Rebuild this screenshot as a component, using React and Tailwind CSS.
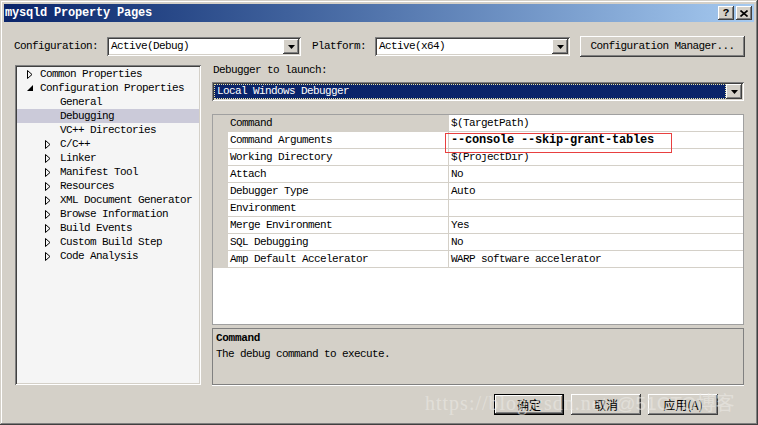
import React from "react";

const raised =
  "shadow-[inset_-1px_-1px_#404040,inset_1px_1px_#ffffff,inset_-2px_-2px_#808080,inset_2px_2px_#d4d0c8]";
const sunken =
  "shadow-[inset_1px_1px_#808080,inset_-1px_-1px_#ffffff,inset_2px_2px_#404040,inset_-2px_-2px_#d4d0c8]";
const txt = "text-[11px] tracking-[-0.6px] text-black whitespace-nowrap";

const DownArrow = () => (
  <svg width="7" height="4" viewBox="0 0 7 4">
    <polygon points="0,0 7,0 3.5,4" fill="#000" />
  </svg>
);

const ComboButton = () => (
  <div className={`w-[16px] h-[15px] bg-[#d4d0c8] flex items-center justify-center ${raised}`}>
    <DownArrow />
  </div>
);

const Combo = ({ value, width }) => (
  <div className={`${width} h-[19px] bg-white flex items-center pl-[4px] pr-[2px] ${sunken}`}>
    <span className={`${txt} flex-1`}>{value}</span>
    <ComboButton />
  </div>
);

const treeItems = [
  { label: "Common Properties", kind: "closed0" },
  { label: "Configuration Properties", kind: "open0" },
  { label: "General", kind: "leaf" },
  { label: "Debugging", kind: "leaf", selected: true },
  { label: "VC++ Directories", kind: "leaf" },
  { label: "C/C++", kind: "closed1" },
  { label: "Linker", kind: "closed1" },
  { label: "Manifest Tool", kind: "closed1" },
  { label: "Resources", kind: "closed1" },
  { label: "XML Document Generator", kind: "closed1" },
  { label: "Browse Information", kind: "closed1" },
  { label: "Build Events", kind: "closed1" },
  { label: "Custom Build Step", kind: "closed1" },
  { label: "Code Analysis", kind: "closed1" },
];

const ClosedArrow = () => (
  <svg width="6" height="9" viewBox="0 0 6 9">
    <polygon points="0.5,0.5 5,4.5 0.5,8.5" fill="none" stroke="#000" strokeWidth="1" />
  </svg>
);

const OpenArrow = () => (
  <svg width="6" height="6" viewBox="0 0 6 6">
    <polygon points="6,0 6,6 0,6" fill="#000" />
  </svg>
);

const TreeRow = ({ item }) => {
  let lead = null;
  if (item.kind === "closed0")
    lead = (
      <div className="pl-[10px] w-[23px] flex items-center">
        <ClosedArrow />
      </div>
    );
  else if (item.kind === "open0")
    lead = (
      <div className="pl-[10px] w-[23px] flex items-center">
        <OpenArrow />
      </div>
    );
  else if (item.kind === "closed1")
    lead = (
      <div className="pl-[28px] w-[43px] flex items-center">
        <ClosedArrow />
      </div>
    );
  else lead = <div className="w-[43px]" />;

  return (
    <div className={`h-[14px] flex items-center ${item.selected ? "bg-[#cbcad9]" : ""}`}>
      {lead}
      <span className={txt}>{item.label}</span>
    </div>
  );
};

const gridRows = [
  { name: "Command", value: "$(TargetPath)", selected: true },
  { name: "Command Arguments", value: "--console --skip-grant-tables", bold: true },
  { name: "Working Directory", value: "$(ProjectDir)" },
  { name: "Attach", value: "No" },
  { name: "Debugger Type", value: "Auto" },
  { name: "Environment", value: "" },
  { name: "Merge Environment", value: "Yes" },
  { name: "SQL Debugging", value: "No" },
  { name: "Amp Default Accelerator", value: "WARP software accelerator" },
];

const GridRow = ({ row }) => (
  <div className="flex h-[17px]">
    <div className="w-[15px] bg-[#d4d0c8]" />
    <div
      className={`w-[221px] border-b border-r border-[#d4d0c8] flex items-center pl-[2px] ${
        row.selected ? "bg-[#d4d0c8]" : ""
      }`}
    >
      <span className={txt}>{row.name}</span>
    </div>
    <div className="flex-1 border-b border-[#d4d0c8] flex items-center pl-[2px]">
      {row.bold ? (
        <span className="text-[12px] tracking-[-0.2px] font-bold text-black whitespace-nowrap">
          {row.value}
        </span>
      ) : (
        <span className={txt}>{row.value}</span>
      )}
    </div>
  </div>
);

const DlgButton = ({ children, isDefault }) => (
  <div
    className={`w-[70px] h-[21px] bg-[#d4d0c8] flex items-center justify-center ${
      isDefault ? "border border-black" : ""
    } ${raised}`}
  >
    <span className="font-['Noto_Sans_CJK_SC',sans-serif] text-[12px] leading-none text-black">
      {children}
    </span>
  </div>
);

export default function App() {
  return (
    <div
      className={`relative w-[758px] h-[425px] bg-[#d4d0c8] p-[4px] flex flex-col font-['Liberation_Mono',monospace] shadow-[inset_-1px_-1px_#404040,inset_1px_1px_#d4d0c8,inset_-2px_-2px_#808080,inset_2px_2px_#ffffff]`}
    >
      {/* title bar */}
      <div className="h-[18px] bg-gradient-to-r from-[#0a246a] to-[#a6caf0] flex items-center pl-[1px] pr-[2px]">
        <span className="text-[12px] tracking-[-0.2px] font-bold text-white flex-1 whitespace-nowrap">
          mysqld Property Pages
        </span>
        <div className={`w-[16px] h-[14px] bg-[#d4d0c8] flex items-center justify-center ${raised}`}>
          <span className="text-[11px] font-bold leading-none text-black">?</span>
        </div>
        <div className={`ml-[2px] w-[16px] h-[14px] bg-[#d4d0c8] flex items-center justify-center ${raised}`}>
          <svg width="8" height="7" viewBox="0 0 8 7">
            <path d="M0.5 0.5 L7.5 6.5 M7.5 0.5 L0.5 6.5" stroke="#000" strokeWidth="1.6" />
          </svg>
        </div>
      </div>

      {/* configuration row */}
      <div className="mt-[14px] h-[21px] flex items-center pl-[10px]">
        <span className={`${txt} w-[93px]`}>Configuration:</span>
        <Combo value="Active(Debug)" width="w-[194px]" />
        <span className={`${txt} ml-[11px] w-[63px]`}>Platform:</span>
        <Combo value="Active(x64)" width="w-[195px]" />
        <div className={`ml-[10px] w-[165px] h-[21px] flex items-center justify-center ${raised}`}>
          <span className={txt}>Configuration Manager...</span>
        </div>
      </div>

      {/* main area */}
      <div className="mt-[8px] h-[320px] flex">
        <div className={`ml-[11px] w-[186px] h-[320px] bg-[#f5f5f5] p-[2px] ${sunken}`}>
          {treeItems.map((item) => (
            <TreeRow key={item.label} item={item} />
          ))}
        </div>

        <div className="ml-[11px] w-[532px] flex flex-col">
          <div className="mt-[-2px] h-[14px] flex items-center pl-[1px]">
            <span className={txt}>Debugger to launch:</span>
          </div>

          <div className={`mt-[5px] h-[19px] bg-white flex items-center p-[2px] ${sunken}`}>
            <div className="flex-1 h-full bg-[#0a246a] border border-dotted border-[#e8e4a8] flex items-center pl-[2px]">
              <span className="text-[11px] tracking-[-0.6px] text-white whitespace-nowrap">
                Local Windows Debugger
              </span>
            </div>
            <ComboButton />
          </div>

          <div className="relative mt-[13px] h-[211px] bg-white border border-[#a0a0a0] flex flex-col">
            {gridRows.map((row) => (
              <GridRow key={row.name} row={row} />
            ))}
            <div className="absolute left-[232px] top-[18px] w-[227px] h-[20px] border border-[#e84040]" />
          </div>

          <div className="mt-[3px] h-[57px] border border-[#808080] shadow-[0_1px_#ffffff] pl-[3px] pt-[1px] flex flex-col">
            <span className="text-[11px] tracking-[-0.3px] font-bold text-black leading-[16px]">
              Command
            </span>
            <span className={`${txt} leading-[16px]`}>The debug command to execute.</span>
          </div>
        </div>
      </div>

      {/* dialog buttons */}
      <div className="mt-[9px] flex justify-end gap-[7px] pr-[36px]">
        <DlgButton isDefault>确定</DlgButton>
        <DlgButton>取消</DlgButton>
        <DlgButton>应用(A)</DlgButton>
      </div>

      {/* watermark */}
      <div className="absolute left-[425px] top-[388px] flex items-baseline pointer-events-none">
        <span className="font-['Liberation_Serif',serif] text-[20px] tracking-[1px] text-[#ebe9e4]/60">
          https://blog.csdn.net
        </span>
        <span className="ml-[8px] font-['Liberation_Sans','Noto_Sans_CJK_SC',sans-serif] text-[19px] text-[#ebe9e4]/60">
          @51CTO博客
        </span>
      </div>
    </div>
  );
}
